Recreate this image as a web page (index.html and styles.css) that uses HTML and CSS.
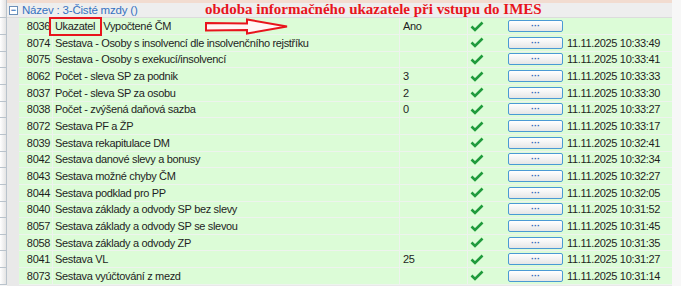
FILE: index.html
```html
<!DOCTYPE html>
<html lang="cs">
  <head>
    <meta charset="UTF-8" />
    <title>Čisté mzdy</title>
    <link rel="stylesheet" href="styles.css">
  </head>
  <body>
    <div class="gutter">
      <div class="gutter-cell head"></div>
      <div class="gutter-cell"></div><div class="gutter-cell"></div><div class="gutter-cell"></div><div class="gutter-cell"></div>
      <div class="gutter-cell"></div><div class="gutter-cell"></div><div class="gutter-cell"></div><div class="gutter-cell"></div>
      <div class="gutter-cell"></div><div class="gutter-cell"></div><div class="gutter-cell"></div><div class="gutter-cell"></div>
      <div class="gutter-cell"></div><div class="gutter-cell"></div><div class="gutter-cell"></div><div class="gutter-cell"></div>
    </div>

    <div class="panel">
      <div class="top-strip"></div>
      <div class="group-row">
        <span class="toggle">−</span>
        <span class="group-title">Název : 3-Čisté mzdy ()</span>
      </div>

      <div class="rows" id="rows"></div>

      <!-- poznámky v obrázku -->
      <div class="note">obdoba informačného ukazatele při vstupu do IMES</div>
      <div class="mark-box"></div>
      <svg class="arrow" width="86" height="17" viewBox="0 0 86 17">
        <polygon points="2,5 43,5.5 43,1.5 83,8.5 43,15.5 43,12 2,12.5" fill="#fff5f5" stroke="#e8141c" stroke-width="2" stroke-linejoin="miter" />
      </svg>
    </div>

    <div class="edge"></div>

    <script>
      const data = [
        ["8036", "Ukazatel   Vypočtené ČM", "Ano", ""],
        ["8074", "Sestava - Osoby s insolvencí dle insolvenčního rejstříku", "", "11.11.2025 10:33:49"],
        ["8075", "Sestava - Osoby s exekucí/insolvencí", "", "11.11.2025 10:33:41"],
        ["8062", "Počet - sleva SP za podnik", "3", "11.11.2025 10:33:33"],
        ["8037", "Počet - sleva SP za osobu", "2", "11.11.2025 10:33:30"],
        ["8038", "Počet - zvýšená daňová sazba", "0", "11.11.2025 10:33:27"],
        ["8072", "Sestava PF a ŽP", "", "11.11.2025 10:33:17"],
        ["8039", "Sestava rekapitulace DM", "", "11.11.2025 10:32:41"],
        ["8042", "Sestava danové slevy a bonusy", "", "11.11.2025 10:32:34"],
        ["8043", "Sestava možné chyby ČM", "", "11.11.2025 10:32:27"],
        ["8044", "Sestava podklad pro PP", "", "11.11.2025 10:32:05"],
        ["8040", "Sestava základy a odvody SP bez slevy", "", "11.11.2025 10:31:52"],
        ["8057", "Sestava základy a odvody SP se slevou", "", "11.11.2025 10:31:45"],
        ["8058", "Sestava základy a odvody ZP", "", "11.11.2025 10:31:35"],
        ["8041", "Sestava VL", "25", "11.11.2025 10:31:27"],
        ["8073", "Sestava vyúčtování z mezd", "", "11.11.2025 10:31:14"]
      ];

      const check =
        '<svg width="14" height="11" viewBox="0 0 14 11"><path d="M1.5 5.5 L5 9 L12.5 1.5" fill="none" stroke="#1f9a3c" stroke-width="2.6" /></svg>';

      const rows = document.getElementById("rows");
      data.forEach(([code, name, value, date]) => {
        const row = document.createElement("div");
        row.className = "row";
        row.innerHTML =
          '<div class="cell code">' + code + "</div>" +
          '<div class="cell name">' + name + "</div>" +
          '<div class="cell value">' + value + "</div>" +
          '<div class="cell check">' + check + "</div>" +
          '<div class="cell action"><button class="dots">···</button></div>' +
          '<div class="cell date">' + date + "</div>";
        rows.appendChild(row);
      });
    </script>
  </body>
</html>
```

FILE: styles.css
```css
* {
  box-sizing: border-box;
}

html,
body {
  margin: 0;
  padding: 0;
  height: 286px;
  overflow: hidden;
  background: #f6f6f6;
  font-family: "Liberation Sans", Arial, sans-serif;
  font-size: 11px;
  color: #1e1e1e;
}

body {
  display: flex;
}

.gutter {
  width: 7px;
  display: flex;
  flex-direction: column;
  background: #f4f4f4;
}

.gutter-cell {
  height: 16.67px;
  flex: none;
  background: linear-gradient(to right, #ffffff, #e4e4e4);
  border-bottom: 1px solid #b9c3cc;
  border-right: 1px solid #b9c3cc;
}

.gutter-cell.head {
  height: 18.3px;
}

.panel {
  position: relative;
  width: 665px;
  background: #e9e9e9;
}

.edge {
  flex: 1;
  background: #f7f7f7;
}

.top-strip {
  height: 3px;
  background: #f2dcd0;
}

.group-row {
  height: 15.3px;
  display: flex;
  align-items: center;
  gap: 4px;
  padding-left: 2px;
  background: #eeeeee;
  border-bottom: 1px solid #dcdcdc;
}

.toggle {
  width: 9px;
  height: 9px;
  border: 1px solid #6b8fb8;
  background: #fff;
  color: #2f6cb8;
  font-size: 9px;
  line-height: 6px;
  text-align: center;
  font-weight: bold;
}

.group-title {
  color: #3572c2;
  font-size: 11.5px;
  letter-spacing: -0.2px;
}

.rows {
  padding-left: 12px;
}

.row {
  display: grid;
  grid-template-columns: 34px 347px 68px 37px 61px 1fr;
  height: 16.67px;
  background: #dcfcd7;
  border-bottom: 1px solid #eef3ee;
  letter-spacing: -0.33px;
}

.cell {
  display: flex;
  align-items: center;
  white-space: pre;
  overflow: hidden;
}

.code {
  justify-content: flex-end;
  padding-right: 2px;
  border-right: 1px solid #eef3ee;
}

.name {
  padding-left: 2px;
  border-right: 1px solid #eef3ee;
}

.value {
  padding-left: 3px;
  border-right: 1px solid #eef3ee;
}

.check {
  padding-left: 2px;
}

.action {
  padding-left: 3px;
}

.dots {
  width: 55px;
  height: 12px;
  padding: 0;
  border: 1px solid #4a9ad4;
  border-radius: 2px;
  background: linear-gradient(#ffffff, #e6e6e6);
  color: #2f63b5;
  font-family: "Liberation Sans", Arial, sans-serif;
  font-size: 9px;
  font-weight: bold;
  line-height: 8px;
  letter-spacing: 0;
}

.date {
  padding-left: 1px;
}

.note {
  position: absolute;
  top: 1px;
  left: 198px;
  color: #e8141c;
  font-family: "Liberation Serif", "Times New Roman", serif;
  font-size: 15px;
  font-weight: bold;
  white-space: nowrap;
}

.mark-box {
  position: absolute;
  top: 17px;
  left: 42px;
  width: 53px;
  height: 19px;
  border: 2px solid #e8141c;
}

.arrow {
  position: absolute;
  top: 18px;
  left: 197px;
}
```
